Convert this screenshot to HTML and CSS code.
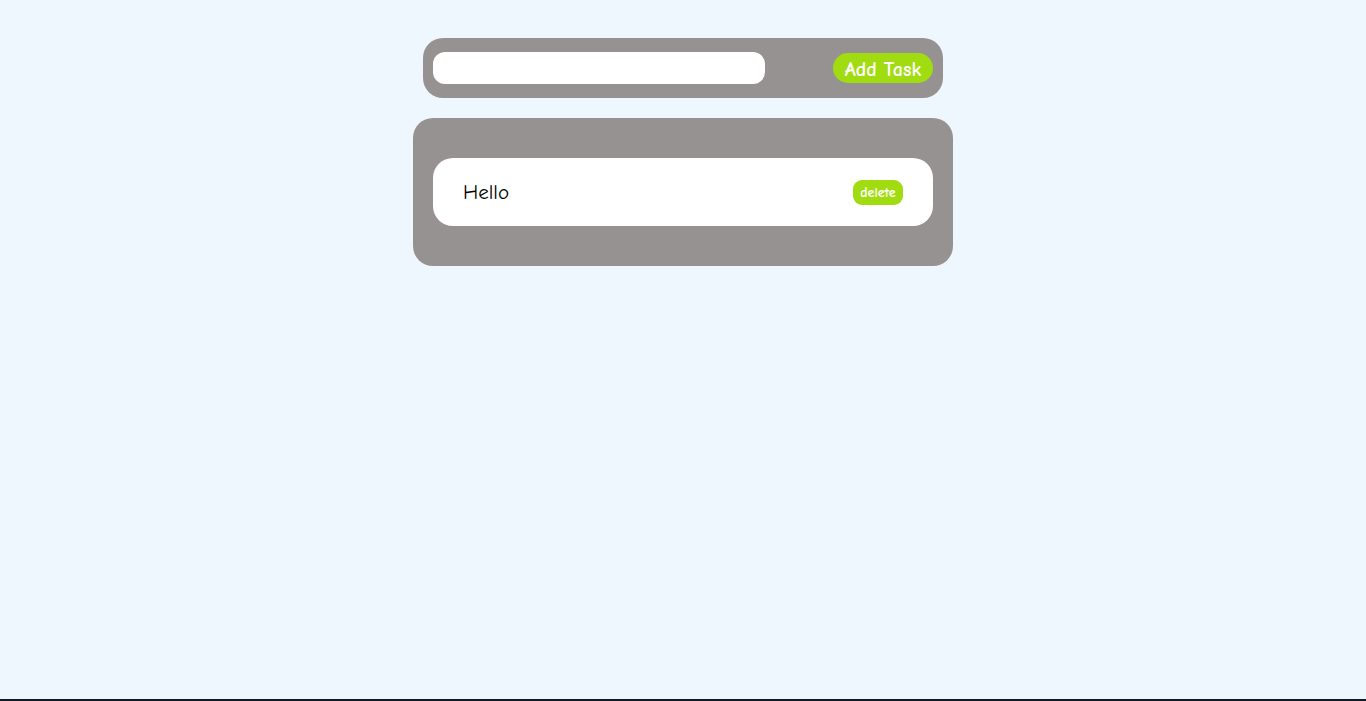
FILE: index.html
```html
<!DOCTYPE html>
<html>
<head>
<meta charset="utf-8">
<link rel="stylesheet" href="styles.css">
</head>
<body>
<main class="app">
  <div class="add-bar">
    <input class="task-input" type="text">
    <button class="add-btn">Add Task</button>
  </div>
  <ul class="task-list">
    <li class="task">
      <span class="task-text">Hello</span>
      <button class="del-btn">delete</button>
    </li>
  </ul>
</main>
<div class="taskbar"></div>
</body>
</html>
```
FILE: styles.css
```css
html, body {
  margin: 0;
  padding: 0;
  height: 100%;
}
body {
  background: #eef6fe;
  font-family: "Comic Sans MS", "Comic Neue", "DejaVu Sans", sans-serif;
  display: flex;
  flex-direction: column;
}
.app {
  flex: 1;
  display: flex;
  flex-direction: column;
  align-items: center;
  padding-top: 38px;
  gap: 20px;
}
.add-bar {
  width: 520px;
  height: 60px;
  box-sizing: border-box;
  background: #969291;
  border-radius: 20px;
  display: flex;
  align-items: center;
  justify-content: space-between;
  padding: 0 10px;
}
.task-input {
  width: 332px;
  height: 32px;
  box-sizing: border-box;
  border: none;
  border-radius: 12px;
  background: #fff;
  outline: none;
}
.add-btn {
  width: 100px;
  height: 30px;
  border: none;
  border-radius: 15px;
  background: #a1dc10;
  color: #fff;
  font-family: inherit;
  font-size: 20px;
  font-weight: 600;
  padding: 2px 0 0;
}
.task-list {
  list-style: none;
  margin: 0;
  width: 540px;
  box-sizing: border-box;
  background: #969291;
  border-radius: 20px;
  padding: 40px 20px;
}
.task {
  height: 68px;
  background: #fff;
  border-radius: 20px;
  display: flex;
  align-items: center;
  justify-content: space-between;
  padding: 0 30px;
}
.task-text {
  font-size: 21px;
  color: #000;
}
.del-btn {
  width: 50px;
  height: 25px;
  border: none;
  border-radius: 9px;
  background: #a1dc10;
  color: #fff;
  font-family: inherit;
  font-size: 14px;
  font-weight: 800;
  padding: 0;
}
.taskbar {
  height: 2px;
  background: #111827;
}
```
